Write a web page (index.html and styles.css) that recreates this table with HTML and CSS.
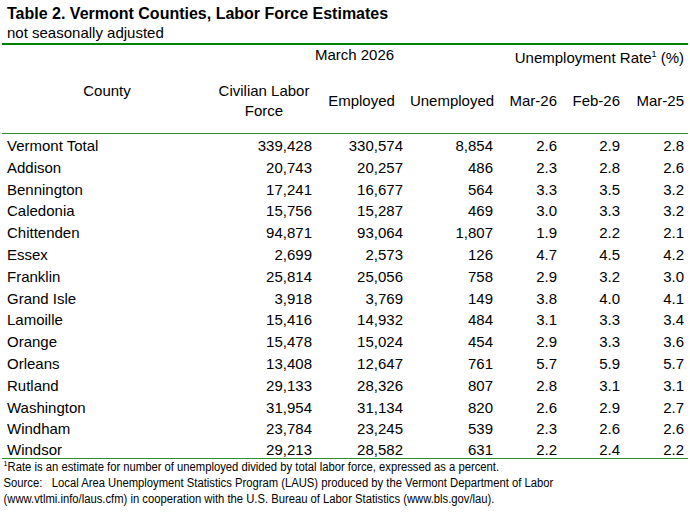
FILE: index.html
```html
<!DOCTYPE html>
<html lang="en">
<head>
<meta charset="utf-8">
<title>Table 2. Vermont Counties, Labor Force Estimates</title>
<link rel="stylesheet" href="styles.css">
</head>
<body>
<div class="page">
  <h1 class="title">Table 2. Vermont Counties, Labor Force Estimates</h1>
  <p class="subtitle">not seasonally adjusted</p>
  <div class="table">
    <div class="head-top">
      <div class="cell"></div>
      <div class="cell group">March 2026</div>
      <div class="cell rate">Unemployment Rate<sup>1</sup> (%)</div>
    </div>
    <div class="row head">
      <div class="cell county hi">County</div>
      <div class="cell ctr hi">Civilian Labor<br>Force</div>
      <div class="cell ctr">Employed</div>
      <div class="cell ctr">Unemployed</div>
      <div class="cell num">Mar-26</div>
      <div class="cell num">Feb-26</div>
      <div class="cell num">Mar-25</div>
    </div>
    <div class="body">
      <div class="row"><div class="cell name">Vermont Total</div><div class="cell num">339,428</div><div class="cell num">330,574</div><div class="cell num">8,854</div><div class="cell num">2.6</div><div class="cell num">2.9</div><div class="cell num">2.8</div></div>
      <div class="row"><div class="cell name">Addison</div><div class="cell num">20,743</div><div class="cell num">20,257</div><div class="cell num">486</div><div class="cell num">2.3</div><div class="cell num">2.8</div><div class="cell num">2.6</div></div>
      <div class="row"><div class="cell name">Bennington</div><div class="cell num">17,241</div><div class="cell num">16,677</div><div class="cell num">564</div><div class="cell num">3.3</div><div class="cell num">3.5</div><div class="cell num">3.2</div></div>
      <div class="row"><div class="cell name">Caledonia</div><div class="cell num">15,756</div><div class="cell num">15,287</div><div class="cell num">469</div><div class="cell num">3.0</div><div class="cell num">3.3</div><div class="cell num">3.2</div></div>
      <div class="row"><div class="cell name">Chittenden</div><div class="cell num">94,871</div><div class="cell num">93,064</div><div class="cell num">1,807</div><div class="cell num">1.9</div><div class="cell num">2.2</div><div class="cell num">2.1</div></div>
      <div class="row"><div class="cell name">Essex</div><div class="cell num">2,699</div><div class="cell num">2,573</div><div class="cell num">126</div><div class="cell num">4.7</div><div class="cell num">4.5</div><div class="cell num">4.2</div></div>
      <div class="row"><div class="cell name">Franklin</div><div class="cell num">25,814</div><div class="cell num">25,056</div><div class="cell num">758</div><div class="cell num">2.9</div><div class="cell num">3.2</div><div class="cell num">3.0</div></div>
      <div class="row"><div class="cell name">Grand Isle</div><div class="cell num">3,918</div><div class="cell num">3,769</div><div class="cell num">149</div><div class="cell num">3.8</div><div class="cell num">4.0</div><div class="cell num">4.1</div></div>
      <div class="row"><div class="cell name">Lamoille</div><div class="cell num">15,416</div><div class="cell num">14,932</div><div class="cell num">484</div><div class="cell num">3.1</div><div class="cell num">3.3</div><div class="cell num">3.4</div></div>
      <div class="row"><div class="cell name">Orange</div><div class="cell num">15,478</div><div class="cell num">15,024</div><div class="cell num">454</div><div class="cell num">2.9</div><div class="cell num">3.3</div><div class="cell num">3.6</div></div>
      <div class="row"><div class="cell name">Orleans</div><div class="cell num">13,408</div><div class="cell num">12,647</div><div class="cell num">761</div><div class="cell num">5.7</div><div class="cell num">5.9</div><div class="cell num">5.7</div></div>
      <div class="row"><div class="cell name">Rutland</div><div class="cell num">29,133</div><div class="cell num">28,326</div><div class="cell num">807</div><div class="cell num">2.8</div><div class="cell num">3.1</div><div class="cell num">3.1</div></div>
      <div class="row"><div class="cell name">Washington</div><div class="cell num">31,954</div><div class="cell num">31,134</div><div class="cell num">820</div><div class="cell num">2.6</div><div class="cell num">2.9</div><div class="cell num">2.7</div></div>
      <div class="row"><div class="cell name">Windham</div><div class="cell num">23,784</div><div class="cell num">23,245</div><div class="cell num">539</div><div class="cell num">2.3</div><div class="cell num">2.6</div><div class="cell num">2.6</div></div>
      <div class="row last"><div class="cell name">Windsor</div><div class="cell num">29,213</div><div class="cell num">28,582</div><div class="cell num">631</div><div class="cell num">2.2</div><div class="cell num">2.4</div><div class="cell num">2.2</div></div>
    </div>
  </div>
  <div class="notes">
    <p class="note"><sup>1</sup>Rate is an estimate for number of unemployed divided by total labor force, expressed as a percent.</p>
    <p class="note">Source:&nbsp;&nbsp;&nbsp;Local Area Unemployment Statistics Program (LAUS) produced by the Vermont Department of Labor</p>
    <p class="note">(www.vtlmi.info/laus.cfm) in cooperation with the U.S. Bureau of Labor Statistics (www.bls.gov/lau).</p>
  </div>
</div>
</body>
</html>
```

FILE: styles.css
```css
* {
  box-sizing: border-box;
}

html, body {
  margin: 0;
  padding: 0;
  background: #ffffff;
}

body {
  font-family: "Liberation Sans", Arial, sans-serif;
  color: #000000;
}

.page {
  width: 690px;
  height: 513px;
  padding-top: 4px;
  overflow: hidden;
}

.title {
  margin: 0;
  padding-left: 7px;
  font-size: 16px;
  font-weight: bold;
  line-height: 19px;
}

.subtitle {
  margin: 0;
  padding-left: 7px;
  font-size: 15px;
  line-height: 19px;
}

.table {
  margin: 1px 0 0 2px;
  width: 686px;
  font-size: 15px;
}

.head-top {
  display: grid;
  grid-template-columns: 210px 285px 191px;
  height: 24px;
  border-top: 2px solid #008000;
  line-height: 18px;
}

.head-top .group {
  text-align: center;
  padding-top: 1px;
}

.head-top .rate {
  text-align: right;
  padding-right: 4px;
  padding-top: 4px;
}

.rate sup {
  font-size: 9px;
  line-height: 0;
  vertical-align: 6px;
}

.row {
  display: grid;
  grid-template-columns: 210px 104px 91px 90px 64px 63px 64px;
  height: 21.8px;
  line-height: 21.8px;
  white-space: nowrap;
}

.body .row .cell {
  padding-top: 1px;
}

.row.head {
  height: 67px;
  line-height: 20px;
  border-bottom: 1px solid #2b912b;
}

.row.head .cell {
  padding-top: 24.3px;
}

.row.head .cell.hi {
  padding-top: 14.3px;
}

.ctr,
.county {
  text-align: center;
}

.num {
  text-align: right;
  padding-right: 4px;
}

.name {
  padding-left: 5px;
}

.body .row.last {
  height: 19.8px;
  line-height: 16px;
  border-bottom: 1px solid #2b912b;
}

.body .row.last .cell {
  padding-top: 3px;
}

.notes {
  padding-left: 4px;
  font-size: 12.5px;
  transform: scaleX(0.9);
  transform-origin: left top;
}

.note {
  margin: 0;
  line-height: 16px;
  white-space: nowrap;
}

.note sup {
  font-size: 8px;
  line-height: 0;
  vertical-align: 5px;
}
```
